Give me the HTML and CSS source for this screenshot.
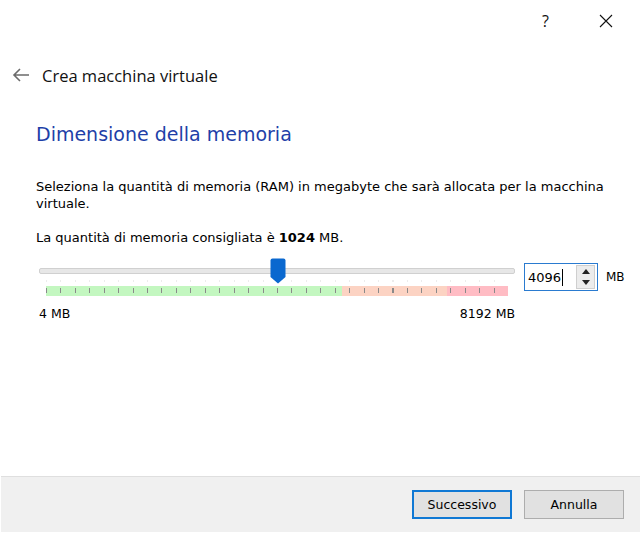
FILE: index.html
```html
<!DOCTYPE html>
<html lang="it">
<head>
<meta charset="utf-8">
<title>Crea macchina virtuale</title>
<link rel="stylesheet" href="styles.css">
</head>
<body>
<div class="dialog">
  <div class="titlebar">
    <span class="tb-help">?</span>
    <span class="tb-close">
      <svg width="14" height="14" viewBox="0 0 14 14"><path d="M1 1L13 13M13 1L1 13" stroke="#111" stroke-width="1.1" fill="none"/></svg>
    </span>
  </div>
  <div class="nav">
    <svg class="back" width="18" height="14" viewBox="0 0 18 14"><path d="M17 7H2M8 1L2 7L8 13" stroke="#6b6b6b" stroke-width="1.6" fill="none"/></svg>
    <span class="nav-title">Crea macchina virtuale</span>
  </div>
  <div class="content">
    <h1 class="heading">Dimensione della memoria</h1>
    <p class="desc">Seleziona la quantità di memoria (RAM) in megabyte che sarà allocata per la macchina virtuale.</p>
    <p class="reco">La quantità di memoria consigliata è <b>1024</b> MB.</p>
    <div class="memrow">
      <div class="slider">
        <div class="track">
          <svg class="thumb" width="16" height="26" viewBox="0 0 16 26"><path d="M0.5 2.5Q0.5 0.5 2.5 0.5H13.5Q15.5 0.5 15.5 2.5V19L8 25.5L0.5 19Z" fill="#0a68cf"/></svg>
        </div>
        <div class="faint"></div>
        <div class="scale"></div>
        <div class="labels"><span>4 MB</span><span>8192 MB</span></div>
      </div>
      <div class="spin">
        <span class="spin-val">4096<span class="caret"></span></span>
        <span class="spin-btns">
          <span class="spin-btn"><svg width="8" height="5" viewBox="0 0 8 5"><path d="M0 5L4 0L8 5Z" fill="#222"/></svg></span>
          <span class="spin-btn"><svg width="8" height="5" viewBox="0 0 8 5"><path d="M0 0L4 5L8 0Z" fill="#222"/></svg></span>
        </span>
      </div>
      <span class="unit">MB</span>
    </div>
  </div>
  <div class="footer">
    <button class="btn btn-default">Successivo</button>
    <button class="btn">Annulla</button>
  </div>
</div>
</body>
</html>
```
FILE: styles.css
```css
html, body {
  margin: 0;
  padding: 0;
  background: #ffffff;
}
body {
  width: 640px;
  height: 534px;
  overflow: hidden;
  font-family: "DejaVu Sans", Verdana, sans-serif;
  color: #000;
}
.dialog {
  height: 534px;
  display: flex;
  flex-direction: column;
}
.titlebar {
  height: 42px;
  display: flex;
  align-items: center;
  justify-content: flex-end;
  padding-right: 27px;
  gap: 50px;
}
.tb-help {
  font-family: "Open Sans", sans-serif;
  font-size: 16px;
  color: #111;
  line-height: 1;
}
.tb-close {
  display: flex;
}
.nav {
  height: 28px;
  margin-top: 19px;
  display: flex;
  align-items: center;
  padding-left: 12px;
}
.back {
  display: block;
}
.nav-title {
  margin-left: 12px;
  font-family: "Open Sans", sans-serif;
  font-size: 16.5px;
  color: #111;
}
.content {
  padding-left: 36px;
  padding-right: 0;
}
.heading {
  margin: 32px 0 0 0;
  font-weight: normal;
  font-size: 19px;
  color: #1e3fa8;
  line-height: 26px;
}
.desc {
  margin: 31px 0 0 0;
  font-size: 13px;
  line-height: 17px;
  width: 592px;
}
.reco {
  margin: 17px 0 0 0;
  font-size: 13px;
  line-height: 17px;
}
.memrow {
  display: flex;
  align-items: flex-start;
  margin-top: 10px;
}
.slider {
  flex-shrink: 0;
  width: 476px;
  margin-left: 3px;
  padding-top: 12px;
}
.track {
  position: relative;
  height: 4px;
  background: #e7e7e7;
  border: 1px solid #d0d0d0;
  border-radius: 2px;
}
.thumb {
  position: absolute;
  left: 230px;
  top: -11px;
}
.faint {
  margin: 6px 7px 0 7px;
  height: 2px;
  background: repeating-linear-gradient(to right, #ececec 0 1px, transparent 1px 14.4375px);
}
.scale {
  margin: 4px 7px 0 7px;
  height: 10px;
  background:
    repeating-linear-gradient(to right, #8a8a8a 0 1px, transparent 1px 14.4375px) 0 2px / 100% 5px no-repeat,
    linear-gradient(to right, #c3f7c0 0 64%, #fcd3c3 64% 86.8%, #ffbcc4 86.8% 100%);
}
.labels {
  display: flex;
  justify-content: space-between;
  margin-top: 11px;
  padding-left: 0;
  font-size: 12.5px;
  line-height: 14px;
}
.spin {
  flex-shrink: 0;
  margin-left: 9px;
  margin-top: 7px;
  height: 26px;
  border: 1px solid #2a7bd0;
  display: flex;
  align-items: center;
  justify-content: space-between;
  padding: 0 2px 0 3px;
  box-sizing: content-box;
  width: 67px;
}
.spin-val {
  font-size: 13px;
  display: flex;
  align-items: center;
}
.caret {
  display: inline-block;
  width: 1px;
  height: 17px;
  background: #000;
  margin-left: 1px;
}
.spin-btns {
  display: flex;
  flex-direction: column;
  width: 17px;
  height: 22px;
  border: 1px solid #cfcfcf;
  background: #ececec;
}
.spin-btn {
  flex: 1;
  display: flex;
  align-items: center;
  justify-content: center;
}
.unit {
  flex-shrink: 0;
  margin-left: 8px;
  margin-top: 14px;
  font-size: 12px;
}
.footer {
  margin-top: auto;
  margin-bottom: 2px;
  margin-left: 1px;
  height: 55px;
  background: #f0f0f0;
  border-top: 1px solid #dfdfdf;
  display: flex;
  align-items: center;
  justify-content: flex-end;
  gap: 12px;
  padding-right: 16px;
}
.btn {
  width: 100px;
  height: 29px;
  font-family: "DejaVu Sans", Verdana, sans-serif;
  font-size: 12.5px;
  color: #000;
  background: #e1e1e1;
  border: 1px solid #adadad;
  padding: 0;
  margin: 0;
}
.btn-default {
  border: 2px solid #0f78d4;
}
```
